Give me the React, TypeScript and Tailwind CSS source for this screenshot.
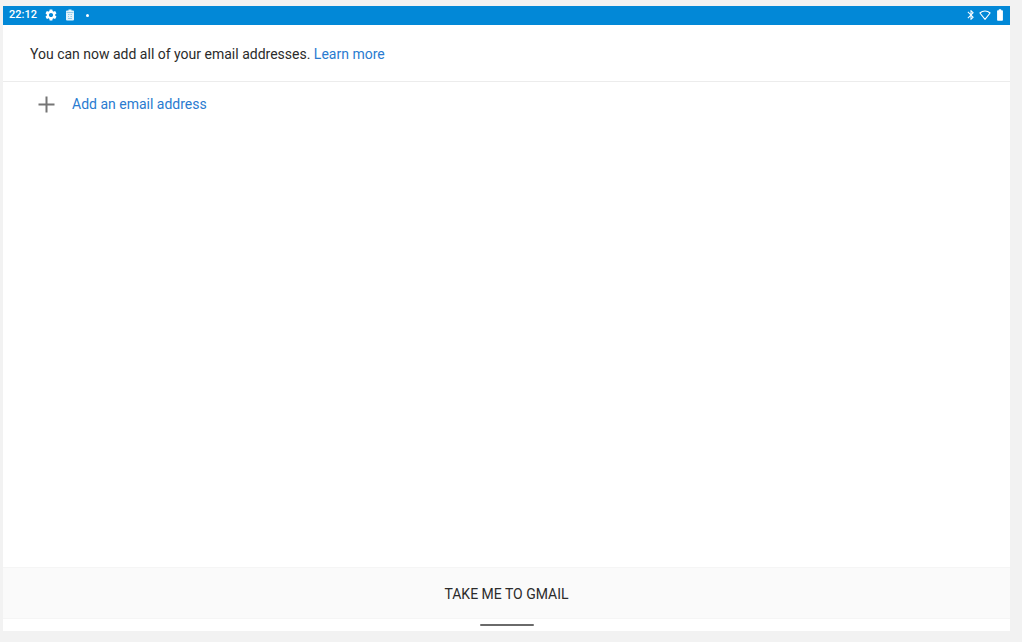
import { MdBatteryFull, MdBluetooth, MdSettings } from 'react-icons/md'

function ClipboardIcon() {
  return (
    <svg className="h-3 w-3" viewBox="0 0 12 12" aria-hidden="true">
      <path
        d="M4.500 0.500h3v1H9a1 1 0 0 1 1 1v8a1 1 0 0 1-1 1H3a1 1 0 0 1-1-1v-8a1 1 0 0 1 1-1h1.500z"
        fill="#e3f3fb"
      />
      <path
        d="M2.500 3.500h7M4 5.500h1.500M6.500 5.500H8M4 7.500h1M6.500 7.500H8M4 9.500h4"
        stroke="#7fc0e6"
        strokeWidth="0.8"
        fill="none"
      />
    </svg>
  )
}

function WifiIcon() {
  return (
    <svg className="h-3 w-3" viewBox="0 0 12 12" aria-hidden="true">
      <path
        d="M0.900 4C3.800 1.300 8.200 1.300 11.100 4L6 10.300z"
        fill="none"
        stroke="currentColor"
        strokeWidth="1.1"
        strokeLinejoin="round"
      />
    </svg>
  )
}

function StatusBar() {
  return (
    <header className="flex h-[19px] items-center justify-between bg-[#0288d7] pr-[3px] pb-px pl-1.5 text-white">
      <div className="flex items-center">
        <time className="text-[11px] leading-3 font-medium">22:12</time>
        <MdSettings className="ml-[7px] h-3.5 w-3.5" aria-hidden="true" />
        <span className="ml-1.5">
          <ClipboardIcon />
        </span>
        <span className="ml-2.5 h-[3px] w-[3px] rounded-full bg-white" />
      </div>
      <div className="flex items-center gap-0.5">
        <MdBluetooth className="h-3 w-3" aria-hidden="true" />
        <WifiIcon />
        <MdBatteryFull className="h-3.5 w-3.5" aria-hidden="true" />
      </div>
    </header>
  )
}

export default function App() {
  return (
    <div className="flex min-h-screen flex-col bg-[#f2f2f2] pt-1.5 pr-3 pb-[11px] pl-[3px] font-[Roboto,sans-serif] text-sm leading-5">
      <div className="flex grow flex-col bg-white">
        <StatusBar />

        <main className="grow">
          <p className="border-b border-[#ececec] px-[27px] pt-[19px] pb-[17px] text-[#2b2b2b]">
            You can now add all of your email addresses.{' '}
            <a href="#learn-more" className="text-[#2a7bd0]">
              Learn more
            </a>
          </p>
          <button
            type="button"
            className="flex w-full items-center gap-[17px] px-[35px] py-3 text-left text-[#2a7bd0]"
          >
            <svg
              className="h-[17px] w-[17px] text-[#757575]"
              viewBox="0 0 17 17"
              fill="none"
              stroke="currentColor"
              strokeWidth="2"
              aria-hidden="true"
            >
              <path d="M8.500 0.500v16M0.500 8.500h16" />
            </svg>
            Add an email address
          </button>
        </main>

        <footer>
          <button
            type="button"
            className="w-full border-y border-[#f5f5f5] bg-[#fafafa] pt-4 pb-3.5 text-[#2b2b2b]"
          >
            TAKE ME TO GMAIL
          </button>
          <div className="flex h-3 items-center justify-center">
            <span className="h-0.5 w-[54px] rounded-full bg-[#6a6a6a]" />
          </div>
        </footer>
      </div>
    </div>
  )
}
